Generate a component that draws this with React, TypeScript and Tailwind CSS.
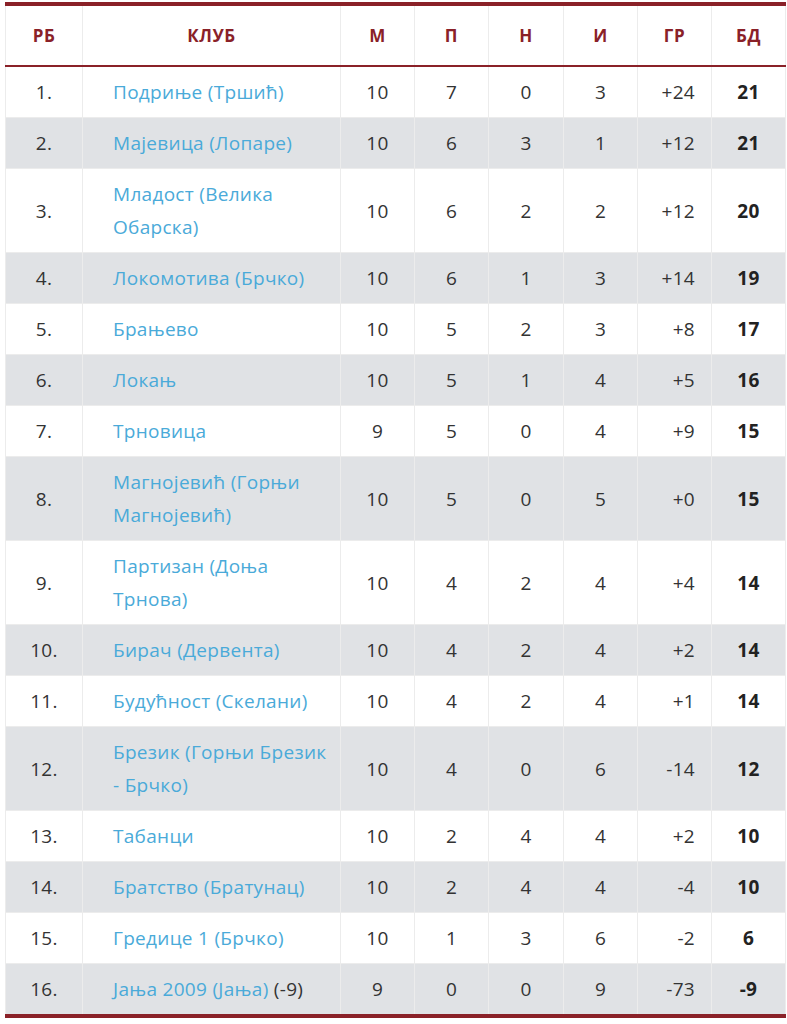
import React from "react";

type Row = {
  rb: string;
  club: string;
  note?: string;
  m: number;
  p: number;
  n: number;
  i: number;
  gr: string;
  bd: number;
};

const rows: Row[] = [
  { rb: "1.", club: "Подриње (Тршић)", m: 10, p: 7, n: 0, i: 3, gr: "+24", bd: 21 },
  { rb: "2.", club: "Мајевица (Лопаре)", m: 10, p: 6, n: 3, i: 1, gr: "+12", bd: 21 },
  { rb: "3.", club: "Младост (Велика Обарска)", m: 10, p: 6, n: 2, i: 2, gr: "+12", bd: 20 },
  { rb: "4.", club: "Локомотива (Брчко)", m: 10, p: 6, n: 1, i: 3, gr: "+14", bd: 19 },
  { rb: "5.", club: "Брањево", m: 10, p: 5, n: 2, i: 3, gr: "+8", bd: 17 },
  { rb: "6.", club: "Локањ", m: 10, p: 5, n: 1, i: 4, gr: "+5", bd: 16 },
  { rb: "7.", club: "Трновица", m: 9, p: 5, n: 0, i: 4, gr: "+9", bd: 15 },
  { rb: "8.", club: "Магнојевић (Горњи Магнојевић)", m: 10, p: 5, n: 0, i: 5, gr: "+0", bd: 15 },
  { rb: "9.", club: "Партизан (Доња Трнова)", m: 10, p: 4, n: 2, i: 4, gr: "+4", bd: 14 },
  { rb: "10.", club: "Бирач (Дервента)", m: 10, p: 4, n: 2, i: 4, gr: "+2", bd: 14 },
  { rb: "11.", club: "Будућност (Скелани)", m: 10, p: 4, n: 2, i: 4, gr: "+1", bd: 14 },
  { rb: "12.", club: "Брезик (Горњи Брезик - Брчко)", m: 10, p: 4, n: 0, i: 6, gr: "-14", bd: 12 },
  { rb: "13.", club: "Табанци", m: 10, p: 2, n: 4, i: 4, gr: "+2", bd: 10 },
  { rb: "14.", club: "Братство (Братунац)", m: 10, p: 2, n: 4, i: 4, gr: "-4", bd: 10 },
  { rb: "15.", club: "Гредице 1 (Брчко)", m: 10, p: 1, n: 3, i: 6, gr: "-2", bd: 6 },
  { rb: "16.", club: "Јања 2009 (Јања)", note: "(-9)", m: 9, p: 0, n: 0, i: 9, gr: "-73", bd: -9 },
];

const headers = ["РБ", "КЛУБ", "М", "П", "Н", "И", "ГР", "БД"];

export default function App() {
  const td = "border border-[#ececec] pt-[9px] pb-2 leading-[33px] align-middle";
  return (
    <div className="bg-white min-h-[1024px] pl-[5px] pr-[2px] pt-[2px] font-['Open_Sans',sans-serif] text-[19px] tracking-[0.3px] text-[#333]">
      <table className="w-[780px] table-fixed border-collapse">
        <colgroup>
          <col className="w-[77px]" />
          <col className="w-[258px]" />
          <col className="w-[74px]" />
          <col className="w-[74px]" />
          <col className="w-[75px]" />
          <col className="w-[74px]" />
          <col className="w-[74px]" />
          <col className="w-[74px]" />
        </colgroup>
        <thead>
          <tr className="border-t-4 border-b-2 border-[#8a2128]">
            {headers.map((h) => (
              <th
                key={h}
                className="h-[62px] border-x border-[#ececec] text-center text-[17px] tracking-[0.6px] font-bold text-[#8a2128]"
              >
                {h}
              </th>
            ))}
          </tr>
        </thead>
        <tbody className="border-b-4 border-[#8a2128]">
          {rows.map((r, idx) => (
            <tr key={r.rb} className={idx % 2 === 1 ? "bg-[#e0e2e5]" : "bg-white"}>
              <td className={`${td} text-center`}>{r.rb}</td>
              <td className={`${td} pl-[30px] pr-[8px] text-left`}>
                <a className="text-[#4aaad9]">{r.club}</a>
                {r.note && <span> {r.note}</span>}
              </td>
              <td className={`${td} text-center`}>{r.m}</td>
              <td className={`${td} text-center`}>{r.p}</td>
              <td className={`${td} text-center`}>{r.n}</td>
              <td className={`${td} text-center`}>{r.i}</td>
              <td className={`${td} pr-[16px] text-right`}>{r.gr}</td>
              <td className={`${td} text-center font-bold text-[#222]`}>{r.bd}</td>
            </tr>
          ))}
        </tbody>
      </table>
    </div>
  );
}
